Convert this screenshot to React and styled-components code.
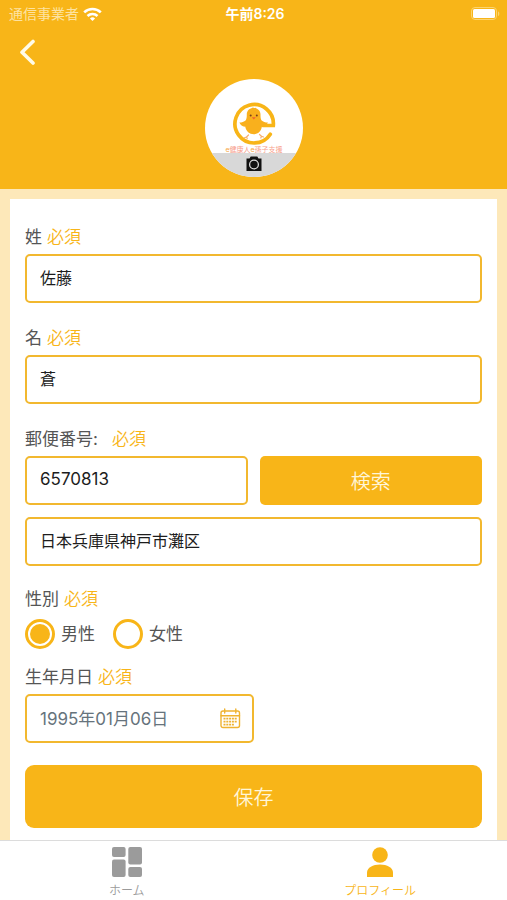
import React, { useState } from "react";
import styled, { createGlobalStyle } from "styled-components";

const AMBER = "#f8b518";

const GlobalStyle = createGlobalStyle`
  *, *::before, *::after { box-sizing: border-box; }
  body {
    margin: 0;
    background: #fde8b9;
    color: #555;
    font-family: Inter, "Noto Sans CJK JP", sans-serif;
  }
  button, input { font-family: inherit; margin: 0; }
`;

const Page = styled.div`
  display: flex;
  flex-direction: column;
  min-height: 100vh;
`;

const Header = styled.header`
  display: flex;
  flex-direction: column;
  background: ${AMBER};
  color: #fff;
  padding-bottom: 12px;
`;

const StatusBar = styled.div`
  display: grid;
  grid-template-columns: 1fr auto 1fr;
  align-items: center;
  height: 28px;
  padding: 0 6px 0 9px;
  font-size: 14px;
  line-height: 20px;
`;

const Carrier = styled.div`
  display: flex;
  align-items: center;
  gap: 4px;
  color: #fde3a2;
`;

const Clock = styled.time`
  font-weight: 600;
`;

const Battery = styled.svg`
  justify-self: end;
`;

const BackButton = styled.button`
  display: flex;
  align-self: flex-start;
  padding: 11px 18px 13px;
  border: 0;
  background: none;
  color: #fffbe8;
  cursor: pointer;
`;

const AvatarButton = styled.button`
  align-self: center;
  width: 98px;
  height: 98px;
  padding: 0;
  border: 0;
  border-radius: 50%;
  overflow: hidden;
  background: #fff;
  cursor: pointer;
`;

const Main = styled.main`
  flex: 1;
  display: flex;
  padding: 10px 10px 0;
`;

const Card = styled.form`
  flex: 1;
  min-width: 0;
  display: flex;
  flex-direction: column;
  gap: 22px;
  padding: 25px 15px 12px;
  background: #fff;
`;

const Section = styled.div`
  display: flex;
  flex-direction: column;
  gap: ${(p) => p.$gap}px;
`;

const Field = styled.div`
  display: flex;
  flex-direction: column;
  gap: 4px;
`;

const Choices = styled.fieldset`
  min-width: 0;
  margin: 0;
  padding: 0;
  border: 0;
`;

const labelText = `
  display: block;
  padding: 0;
  font-size: 17px;
  line-height: 26px;
`;

const Label = styled.label`${labelText}`;
const Legend = styled.legend`${labelText}`;

const Required = styled.span`
  margin-left: ${(p) => (p.$wide ? 14 : 5)}px;
  color: ${AMBER};
  font-weight: 350;
`;

const TextInput = styled.input`
  width: 100%;
  min-width: 0;
  height: 49px;
  padding: 0 13px 3px;
  border: 2px solid #f2b82f;
  border-radius: 5px;
  outline: 0;
  background: #fff;
  color: #1d1d1d;
  font-size: ${(p) => (p.$numeric ? 17 : 16)}px;
`;

const PostalRow = styled.div`
  display: grid;
  grid-template-columns: 1fr 1fr;
  gap: 12px;
`;

const ActionButton = styled.button`
  height: ${(p) => (p.$large ? 63 : 49)}px;
  border: 0;
  border-radius: ${(p) => (p.$large ? 9 : 5)}px;
  background: ${AMBER};
  color: #fff6d8;
  font-size: 20px;
  font-weight: 350;
  cursor: pointer;
`;

const RadioRow = styled.div`
  display: flex;
  gap: 18px;
  padding-top: 7px;
`;

const RadioLabel = styled.label`
  display: flex;
  align-items: center;
  gap: 6px;
  font-size: 17px;
  line-height: 26px;
`;

const Radio = styled.input`
  appearance: none;
  width: 30px;
  height: 30px;
  border: 3px solid ${AMBER};
  border-radius: 50%;
  background: #fff;

  &:checked {
    padding: 2px;
    background: ${AMBER};
    background-clip: content-box;
  }
`;

const DateBox = styled.div`
  display: flex;
  align-items: center;
  width: 50%;
  height: 49px;
  padding: 0 11px 0 13px;
  border: 2px solid #f2b82f;
  border-radius: 5px;
`;

const DateInput = styled.input`
  flex: 1;
  min-width: 0;
  padding: 0 0 3px;
  border: 0;
  outline: 0;
  background: none;
  color: #66737c;
  font-size: 17px;
`;

const IconButton = styled.button`
  display: flex;
  padding: 0;
  border: 0;
  background: none;
  cursor: pointer;
`;

const TabBar = styled.nav`
  position: sticky;
  bottom: 0;
  display: grid;
  grid-template-columns: 1fr 1fr;
  height: 60px;
  border-top: 1px solid #dcdcdc;
  background: #fff;
`;

const Tab = styled.a`
  display: flex;
  flex-direction: column;
  align-items: center;
  gap: 5px;
  padding-top: 6px;
  color: ${(p) => (p.$active ? AMBER : "#9b9b9b")};
  font-size: 12px;
  font-weight: 350;
  line-height: 18px;
  text-decoration: none;
`;

const WifiIcon = () => (
  <svg width="19" height="15" viewBox="0 0 19 15" fill="none" stroke="#fff" strokeWidth="2.6" aria-hidden="true">
    <path d="M1.2 5.4a12 12 0 0 1 16.6 0" />
    <path d="M4.5 9a7.2 7.2 0 0 1 10 0" />
    <path d="M9.5 14 6.9 11.4a3.8 3.8 0 0 1 5.2 0Z" fill="#fff" stroke="none" />
  </svg>
);

const BatteryIcon = () => (
  <Battery width="30" height="14" viewBox="0 0 30 14" aria-label="バッテリー">
    <rect x="0.5" y="0.5" width="25" height="12" rx="3.5" fill="none" stroke="#fbd470" />
    <rect x="2" y="2" width="22" height="9" rx="1.5" fill="#fff" />
    <path d="M27 4.5v4.5c1.8-.6 1.8-3.9 0-4.5Z" fill="#fbd470" />
  </Battery>
);

const BackIcon = () => (
  <svg width="19" height="27" viewBox="0 0 19 27" fill="none" stroke="currentColor" strokeWidth="3.6" strokeLinecap="round" strokeLinejoin="round" aria-hidden="true">
    <path d="M15 2.5 4 13.2 15 24" />
  </svg>
);

const AvatarArt = () => (
  <svg width="98" height="98" viewBox="0 0 98 98" aria-hidden="true">
    <path d="M58 46.500H68.300A19.200 19.200 0 1 0 65.300 55.200" fill="none" stroke={AMBER} strokeWidth="3.7" strokeLinecap="round" />
    <path d="M48.500 29c-4 0-6.700 2.800-6.700 6.400 0 2.600-.2 4.200-1 5.800-1.800 1.500-4 2.200-6.400 2.400 1.200 3 3.400 4.300 5.800 4 .9 4.800 4.200 7.700 8.600 7.700s7.300-2.900 8.100-7.700c2.300.3 4.800-1 6-4-2.600-.2-4.800-.9-6.500-2.400-.8-1.700-.9-3.500-.9-5.800 0-3.700-2.900-6.400-7-6.400Z" fill="#f9b01d" />
    <path d="m46 30 2-1.700 1 1 1.600-.6.8 1.600" fill="#f9b01d" />
    <circle cx="45.7" cy="36.6" r="1" fill="#79401c" />
    <circle cx="51.8" cy="36.6" r="1" fill="#79401c" />
    <path d="M46.800 38.300h4l-2 2.200Z" fill="#ed6031" />
    <g fill="none" stroke="#f6b06f" strokeWidth="1.2" strokeLinecap="round">
      <path d="m43.500 56-2 2m-2 .8 2-.8.7 1.500" />
      <path d="m54.500 55.500 2 1.700m2 .8-2-.8-.7 1.800" />
    </g>
    <text x="49" y="73" textAnchor="middle" fontSize="7" fill="#f7a08c">
      <tspan fill="#f8a63e">e</tspan>健康人<tspan fill="#f8a63e">e</tspan>孫子支援
    </text>
    <rect y="74" width="98" height="24" fill="#d8d8d8" />
    <path d="M41.500 79.500h3l1.200-2h6.600l1.200 2h3v12.500h-15Z" fill="#111" />
    <circle cx="49" cy="85.5" r="4.4" fill="none" stroke="#d8d8d8" strokeWidth="1.3" />
  </svg>
);

const CalendarIcon = () => (
  <svg width="21" height="21" viewBox="0 0 21 21" fill="none" stroke="#efb331" aria-hidden="true">
    <rect x="1" y="3" width="18.5" height="16.5" rx="2" strokeWidth="1.4" />
    <path d="M1 7.7h18.5M4.7 1v4M15.8 1v4" strokeWidth="1.4" strokeLinecap="round" />
    <path d="M3.5 10.7h14M3.5 13.7h14M3.5 16.7h11" strokeWidth="1.8" strokeDasharray="2 .8" />
  </svg>
);

const HomeIcon = () => (
  <svg width="30" height="30" viewBox="0 0 30 30" fill="currentColor" aria-hidden="true">
    <rect width="13.6" height="10" rx="2" />
    <rect y="12.5" width="13.6" height="17.5" rx="2" />
    <rect x="16.3" width="13.7" height="17.5" rx="2" />
    <rect x="16.3" y="20" width="13.7" height="10" rx="2" />
  </svg>
);

const PersonIcon = () => (
  <svg width="30" height="30" viewBox="0 0 30 30" fill="currentColor" aria-hidden="true">
    <circle cx="15" cy="8" r="7.8" />
    <path d="M2 30v-4.500C2 20.500 8 17.500 15 17.500s13 3 13 8V30Z" />
  </svg>
);

export default function App() {
  const [gender, setGender] = useState("male");
  return (
    <Page>
      <GlobalStyle />
      <Header>
        <StatusBar>
          <Carrier>通信事業者<WifiIcon /></Carrier>
          <Clock>午前8:26</Clock>
          <BatteryIcon />
        </StatusBar>
        <BackButton type="button" aria-label="戻る"><BackIcon /></BackButton>
        <AvatarButton type="button" aria-label="写真を変更"><AvatarArt /></AvatarButton>
      </Header>
      <Main>
        <Card onSubmit={(e) => e.preventDefault()}>
          <Field>
            <Label htmlFor="family">姓<Required>必須</Required></Label>
            <TextInput id="family" defaultValue="佐藤" />
          </Field>
          <Field>
            <Label htmlFor="given">名<Required>必須</Required></Label>
            <TextInput id="given" defaultValue="蒼" />
          </Field>
          <Section $gap={20}>
            <Section $gap={12}>
              <Field>
                <Label htmlFor="postal">郵便番号:<Required $wide>必須</Required></Label>
                <PostalRow>
                  <TextInput id="postal" $numeric inputMode="numeric" defaultValue="6570813" />
                  <ActionButton type="button">検索</ActionButton>
                </PostalRow>
              </Field>
              <TextInput aria-label="住所" defaultValue="日本兵庫県神戸市灘区" />
            </Section>
            <Section $gap={15}>
              <Choices>
                <Legend>性別<Required>必須</Required></Legend>
                <RadioRow>
                  <RadioLabel>
                    <Radio type="radio" name="gender" checked={gender === "male"} onChange={() => setGender("male")} />
                    男性
                  </RadioLabel>
                  <RadioLabel>
                    <Radio type="radio" name="gender" checked={gender === "female"} onChange={() => setGender("female")} />
                    女性
                  </RadioLabel>
                </RadioRow>
              </Choices>
              <Field>
                <Label htmlFor="birthday">生年月日<Required>必須</Required></Label>
                <DateBox>
                  <DateInput id="birthday" defaultValue="1995年01月06日" />
                  <IconButton type="button" aria-label="カレンダー"><CalendarIcon /></IconButton>
                </DateBox>
              </Field>
            </Section>
          </Section>
          <ActionButton type="submit" $large>保存</ActionButton>
        </Card>
      </Main>
      <TabBar>
        <Tab href="#home"><HomeIcon />ホーム</Tab>
        <Tab href="#profile" $active aria-current="page"><PersonIcon />プロフィール</Tab>
      </TabBar>
    </Page>
  );
}
